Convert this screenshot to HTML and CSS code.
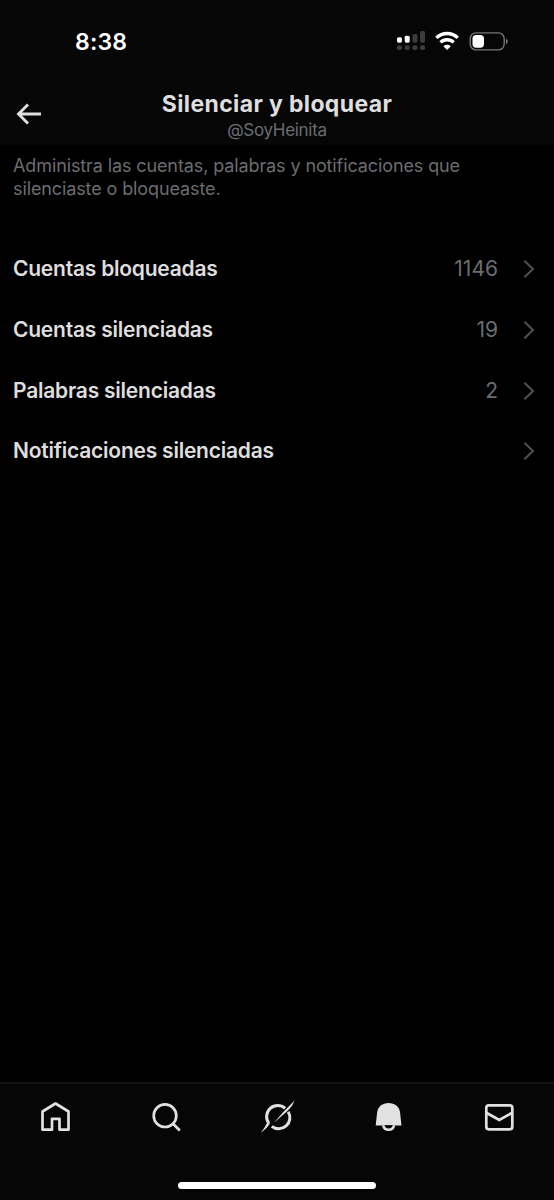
FILE: index.html
```html
<!DOCTYPE html>
<html lang="es">
<head>
<meta charset="utf-8">
<meta name="viewport" content="width=device-width, initial-scale=1">
<title>Silenciar y bloquear</title>
<link rel="stylesheet" href="styles.css">
</head>
<body>
<div class="screen">
  <header class="top">
    <div class="status">
      <span class="time">8:38</span>
      <svg class="status-icons" width="112" height="24" viewBox="0 0 112 24">
        <g fill="#fff"><rect x="1" y="8.3" width="5" height="5.4" rx="1.6"/><rect x="8.7" y="6.7" width="5" height="7" rx="1.6"/></g>
        <g fill="#3c3c3c"><rect x="16.5" y="5" width="5" height="8.7" rx="1.6"/><rect x="24" y="2" width="5" height="11.7" rx="1.6"/>
        <rect x="1" y="16.3" width="5" height="4.7" rx="1.8"/><rect x="8.7" y="16.3" width="5" height="4.7" rx="1.8"/><rect x="16.5" y="16.3" width="5" height="4.7" rx="1.8"/><rect x="24" y="16.3" width="5" height="4.7" rx="1.8"/></g>
        <g fill="none" stroke="#fff" stroke-width="3.4"><path d="M40.4 8.9a15.3 15.3 0 0 1 21.4 0"/><path d="M44.5 13.4a9.5 9.5 0 0 1 13.2 0"/></g>
        <path d="M47.4 17.2a5.4 5.4 0 0 1 7.4 0L51.1 21z" fill="#fff"/>
        <rect x="74.200" y="3.900" width="34" height="17" rx="5.800" fill="none" stroke="#777" stroke-width="1.400"/>
        <rect x="76.500" y="6.100" width="11.500" height="12.600" rx="3.700" fill="#fff"/>
        <path d="M110 9.700c2.300.7 2.300 4.700 0 5.400z" fill="#777"/>
      </svg>
    </div>
    <div class="titlebar">
      <svg class="back" width="26" height="22" viewBox="0 0 26 22" fill="none" stroke="#dedede" stroke-width="2.900"><path d="M25 11H3M12 1.500L2.500 11l9.500 9.500"/></svg>
      <div class="heading">
        <h1 class="title">Silenciar y bloquear</h1>
        <p class="handle">@SoyHeinita</p>
      </div>
    </div>
  </header>
  <main class="content">
    <p class="description">Administra las cuentas, palabras y notificaciones que<br>silenciaste o bloqueaste.</p>
    <ul class="list">
      <li class="row"><span class="label">Cuentas bloqueadas</span><span class="count">1146</span><svg class="chevron" viewBox="0 0 12 20"><path d="M1.400 1.700L10 10l-8.600 8.300"/></svg></li>
      <li class="row"><span class="label">Cuentas silenciadas</span><span class="count">19</span><svg class="chevron" viewBox="0 0 12 20"><path d="M1.400 1.700L10 10l-8.600 8.300"/></svg></li>
      <li class="row"><span class="label">Palabras silenciadas</span><span class="count">2</span><svg class="chevron" viewBox="0 0 12 20"><path d="M1.400 1.700L10 10l-8.600 8.300"/></svg></li>
      <li class="row last"><span class="label">Notificaciones silenciadas</span><span class="count"></span><svg class="chevron" viewBox="0 0 12 20"><path d="M1.400 1.700L10 10l-8.600 8.300"/></svg></li>
    </ul>
  </main>
  <footer class="bottom">
    <nav class="tabs">
      <svg width="36" height="36" viewBox="0 0 36 36" fill="none" stroke="#e1e1e1" stroke-width="2.700"><path d="M5.500 12.500L18.500 4.500l13 8v18.200h-9V19.800H15v10.900H5.500z" stroke-linejoin="round"/></svg>
      <svg width="36" height="36" viewBox="0 0 36 36" fill="none" stroke="#e1e1e1" stroke-width="2.700"><circle cx="17" cy="16.700" r="11.300"/><path d="M25 24.700l6.800 6.800"/></svg>
      <svg width="36" height="36" viewBox="0 0 36 36"><g fill="none" stroke="#e1e1e1" stroke-width="3"><path d="M26.100 9.300A11.100 11.100 0 0 0 9.800 24.200"/><path d="M29.200 12.800A11.100 11.100 0 0 1 12.800 27.300"/></g><path d="M35.800 1.200Q33.500 7.500 28.500 12L15 23.800L24.500 12.800Z M1.800 34Q5.500 29 8 24L11.300 24.200Q8 29.500 1.800 34Z" fill="#e1e1e1"/></svg>
      <svg width="36" height="36" viewBox="0 0 36 36"><path d="M5.700 26.500L7.100 13.700C7.800 7.500 12.400 4 18.600 4S29.400 7.500 30.100 13.700l1.400 12.800z" fill="#e1e1e1"/><path d="M13.200 26.300c.5 3 2.500 4.500 5.400 4.500s4.900-1.500 5.400-4.500" fill="#060606" stroke="#e1e1e1" stroke-width="2.500"/></svg>
      <svg width="36" height="36" viewBox="0 0 36 36" fill="none" stroke="#e1e1e1" stroke-width="2.700"><rect x="5.300" y="6.400" width="26" height="23.900" rx="2.500"/><path d="M5.300 13.700l13 7.200 13-7.200"/></svg>
    </nav>
    <div class="home-indicator"></div>
  </footer>
</div>
</body>
</html>
```
FILE: styles.css
```css
* { box-sizing: border-box; margin: 0; padding: 0; }
body { background: #000; font-family: Inter, "Liberation Sans", sans-serif; color: #dedede; }
.screen { display: flex; flex-direction: column; width: 554px; height: 1200px; overflow: hidden; background: #000; }
svg { display: block; flex: none; }
.top { height: 145px; background: #060606; }
.status { display: flex; justify-content: space-between; align-items: flex-start; height: 89px; padding: 29px 46px 0 75px; }
.time { color: #fff; font-size: 23px; line-height: 26px; font-weight: 600; letter-spacing: 0.2px; }
.titlebar { display: flex; align-items: flex-start; padding: 0 16px; }
.back { margin-top: 14px; }
.heading { flex: 1; margin-right: 26px; text-align: center; }
.title { font-size: 23px; line-height: 31px; font-weight: 700; letter-spacing: 0.36px; white-space: nowrap; }
.handle { font-size: 17px; line-height: 20px; letter-spacing: -0.3px; color: #6b6d70; }
.content { flex: 1; padding: 9px 19px 0 13px; }
.description { color: #6b6d70; font-size: 18px; line-height: 23px; letter-spacing: -0.11px; white-space: nowrap; }
.list { list-style: none; padding-top: 38px; }
.row { display: flex; align-items: center; height: 61px; }
.last { height: 59px; }
.label { flex: 1; font-size: 21px; line-height: 26px; font-weight: 600; letter-spacing: -0.23px; white-space: nowrap; }
.count { margin-right: 25px; color: #6b6d70; font-size: 21px; line-height: 26px; }
.chevron { width: 12px; height: 20px; margin-top: 1px; fill: none; stroke: #515151; stroke-width: 2; }
.bottom { height: 118px; border-top: 2px solid #111; background: #060606; }
.tabs { display: flex; justify-content: space-between; padding: 15px 37px 0; }
.home-indicator { width: 198px; height: 7px; margin: 47px auto 0; border-radius: 4px; background: #fff; }
```
